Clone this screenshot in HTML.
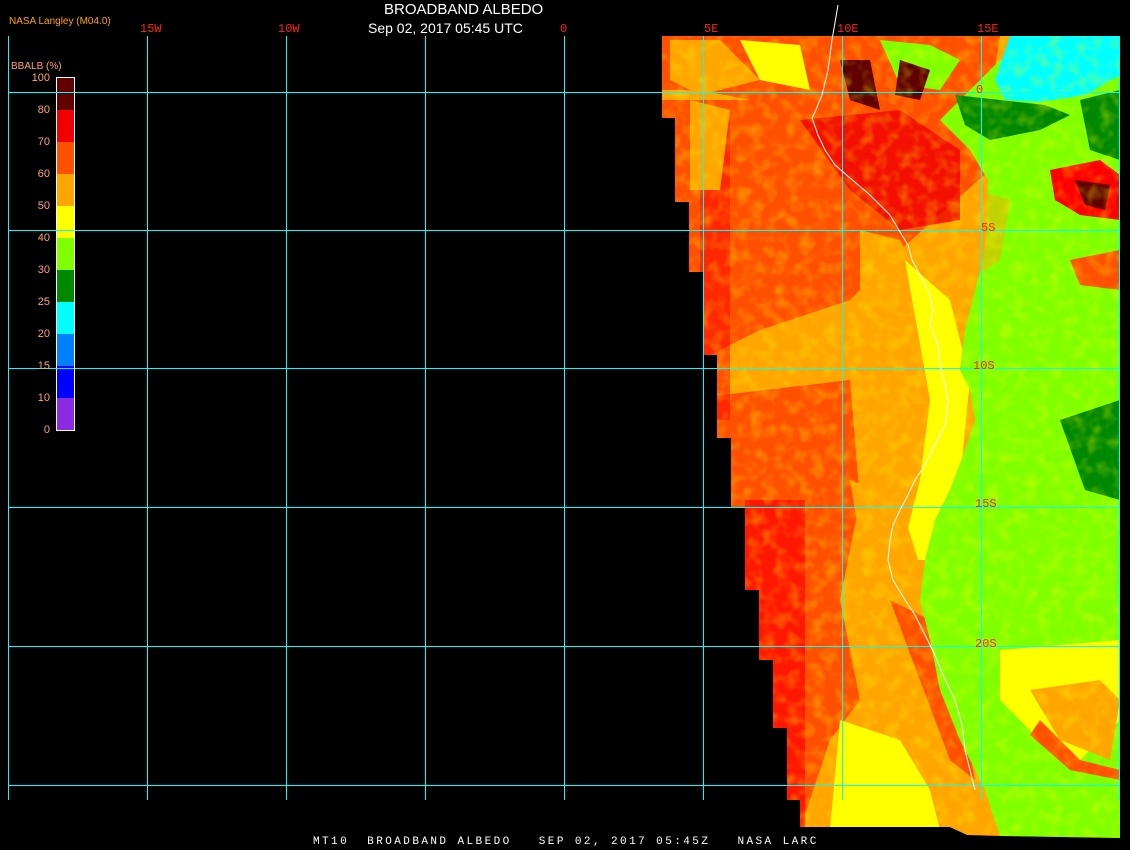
<!DOCTYPE html>
<html><head><meta charset="utf-8"><style>
body{margin:0;background:#000;width:1130px;height:850px;overflow:hidden;position:relative;font-family:"Liberation Sans",sans-serif}
.t{position:absolute;white-space:nowrap}
</style></head><body>
<svg width="1130" height="850" style="position:absolute;left:0;top:0">
<defs>
<clipPath id="img"><polygon points="662,36 1120,36 1120,838 1000,836 967,835 950,827 800,827 800,800 787,800 787,728 773,728 773,660 759,660 759,590 745,590 745,507 731,507 731,438 717,438 717,355 704,355 704,272 689,272 689,202 675,202 675,118 662,118"/></clipPath>
<filter id="n" x="0" y="0" width="100%" height="100%"><feTurbulence type="fractalNoise" baseFrequency="0.08" numOctaves="2" seed="3"/><feColorMatrix values="0 0 0 0 1  0 0 0 0 1  0 0 0 0 0  0 0 0 -2.2 1.25"/></filter>
</defs>
<g clip-path="url(#img)">
<rect x="660" y="36" width="470" height="810" fill="#ffa500"/>
<polygon points="660,100 980,100 990,170 900,250 850,300 760,330 700,360 660,360" fill="#ff5000"/>
<polygon points="680,400 850,380 860,500 840,600 860,700 830,740 800,830 660,830" fill="#ff5000"/>
<rect x="745" y="500" width="60" height="330" fill="#f00" opacity="0.7"/>
<rect x="700" y="120" width="30" height="300" fill="#f00" opacity="0.5"/>
<polygon points="800,120 900,110 960,150 960,220 900,230 850,190" fill="#f00000" opacity="0.8"/>
<polygon points="660,36 1000,36 990,100 900,110 800,110 700,90 660,90" fill="#ff5000"/>
<polygon points="670,40 720,40 760,80 700,95 670,80" fill="#ffa500"/>
<polygon points="740,40 800,45 810,90 760,80" fill="#ffff00"/>
<polygon points="880,40 930,45 960,60 940,90 900,85" fill="#80ff00"/>
<polygon points="840,60 870,60 880,110 850,100" fill="#600000"/>
<polygon points="900,60 930,70 920,100 895,95" fill="#600000"/>
<polygon points="690,100 730,110 720,190 690,190" fill="#ffa500"/>
<polygon points="860,230 900,240 930,300 950,380 900,400 860,360" fill="#ffa500"/>
<polygon points="905,260 950,300 970,380 960,480 930,560 900,560 920,480 930,400" fill="#ffff00"/>
<polygon points="850,480 900,500 930,600 950,700 980,800 960,830 900,830 880,740 860,680 870,600" fill="#ffa500"/>
<polygon points="840,720 900,740 930,790 940,830 830,830" fill="#ffff00"/>
<polygon points="890,600 930,620 960,700 975,780 950,760 920,680" fill="#ff5000"/>
<polygon points="940,120 1000,60 1120,36 1120,838 1000,836 985,790 960,740 940,690 930,640 920,600 925,560 935,520 950,490 965,450 975,420 970,390 960,370 965,330 975,290 985,250 988,180 970,150" fill="#80ff00"/>
<polygon points="975,190 1010,200 1000,260 970,280" fill="#ffa500" opacity="0.5"/>
<polygon points="1000,650 1120,640 1120,720 1080,760 1040,740 1000,700" fill="#ffff00"/>
<polygon points="1030,690 1100,680 1120,700 1110,760 1060,740" fill="#ffa500"/>
<polygon points="1040,720 1080,760 1120,770 1120,780 1070,770 1030,735" fill="#ff5000"/>
<polygon points="1010,36 1120,36 1120,75 1085,95 1040,102 1005,100 995,80" fill="#00ffff"/>
<polygon points="955,95 1000,100 1045,105 1070,115 1040,130 990,140 965,125" fill="#008800"/>
<polygon points="1080,100 1120,90 1120,160 1090,150" fill="#008800"/>
<polygon points="1050,170 1100,160 1120,175 1120,220 1080,215 1055,200" fill="#f00"/>
<polygon points="1075,180 1110,185 1105,210 1085,205" fill="#600000"/>
<polygon points="1070,260 1120,250 1120,290 1080,285" fill="#ff5000"/>
<polygon points="1060,420 1120,400 1120,500 1085,490" fill="#008800"/>
<rect x="660" y="36" width="470" height="810" filter="url(#n)" opacity="0.35"/>
</g>
<g stroke="#00ffff" stroke-width="1" shape-rendering="crispEdges">
<line x1="8.5" y1="36" x2="8.5" y2="800"/><line x1="147.5" y1="36" x2="147.5" y2="800"/><line x1="286.5" y1="36" x2="286.5" y2="800"/><line x1="425.5" y1="36" x2="425.5" y2="800"/><line x1="564.5" y1="36" x2="564.5" y2="800"/><line x1="703.5" y1="36" x2="703.5" y2="800"/><line x1="842.5" y1="36" x2="842.5" y2="800"/><line x1="981.5" y1="36" x2="981.5" y2="800"/><line x1="1119.5" y1="36" x2="1119.5" y2="800"/>
<line x1="8" y1="92.5" x2="1120" y2="92.5"/><line x1="8" y1="230.5" x2="1120" y2="230.5"/><line x1="8" y1="368.5" x2="1120" y2="368.5"/><line x1="8" y1="507.5" x2="1120" y2="507.5"/><line x1="8" y1="646.5" x2="1120" y2="646.5"/><line x1="8" y1="785.5" x2="1120" y2="785.5"/>
</g>
<polyline fill="none" stroke="#fff" stroke-width="1" points="838,5 832,40 828,70 822,95 815,112 812,118 818,135 825,150 835,165 850,178 870,195 890,215 900,232 908,245 912,260 920,275 928,290 933,310 930,325 938,345 940,365 945,385 948,400 945,425 935,445 925,465 915,480 908,495 900,510 893,525 890,540 888,560 893,580 905,600 915,615 925,635 935,655 943,675 955,700 962,725 965,750 970,770 975,790"/>
<g shape-rendering="crispEdges">
<rect x="56.5" y="77.5" width="18" height="353" fill="none" stroke="#fff"/>
<rect x="57" y="78" width="17" height="32" fill="#600000"/>
<rect x="57" y="110" width="17" height="32" fill="#f00000"/>
<rect x="57" y="142" width="17" height="32" fill="#ff5000"/>
<rect x="57" y="174" width="17" height="32" fill="#ffa500"/>
<rect x="57" y="206" width="17" height="32" fill="#ffff00"/>
<rect x="57" y="238" width="17" height="32" fill="#80ff00"/>
<rect x="57" y="270" width="17" height="32" fill="#008800"/>
<rect x="57" y="302" width="17" height="32" fill="#00ffff"/>
<rect x="57" y="334" width="17" height="32" fill="#0080ff"/>
<rect x="57" y="366" width="17" height="32" fill="#0000ff"/>
<rect x="57" y="398" width="17" height="32" fill="#8a2be2"/>
</g>
<line x1="8" y1="92.5" x2="74" y2="92.5" stroke="#00ffff"/>
<line x1="8" y1="230.5" x2="74" y2="230.5" stroke="#00ffff"/>
<line x1="8" y1="368.5" x2="74" y2="368.5" stroke="#00ffff"/>
</svg>
<div class="t" style="left:384px;top:1px;color:#fff;font-size:15px">BROADBAND ALBEDO</div>
<div class="t" style="left:368px;top:20px;color:#fff;font-size:14px">Sep 02, 2017 05:45 UTC</div>
<div class="t" style="left:9px;top:16px;color:#ffa500;font-size:10px">NASA Langley (M04.0)</div>
<div class="t" style="left:11px;top:61px;color:#ffa080;font-size:10px">BBALB (%)</div>
<div style="position:absolute;left:20px;top:62px;width:30px;color:#ffa080;font-size:11px;text-align:right;line-height:32px">100<br>80<br>70<br>60<br>50<br>40<br>30<br>25<br>20<br>15<br>10<br>0</div>
<div style="font-family:'Liberation Mono',monospace;color:#ff2020;font-size:12px">
<div class="t" style="left:140px;top:22px">15W</div>
<div class="t" style="left:278px;top:22px">10W</div>
<div class="t" style="left:560px;top:22px">0</div>
<div class="t" style="left:704px;top:22px">5E</div>
<div class="t" style="left:837px;top:22px">10E</div>
<div class="t" style="left:977px;top:22px">15E</div>
<div class="t" style="left:976px;top:83px">0</div>
<div class="t" style="left:981px;top:221px">5S</div>
<div class="t" style="left:973px;top:359px">10S</div>
<div class="t" style="left:975px;top:497px">15S</div>
<div class="t" style="left:975px;top:637px">20S</div>
</div>
<div class="t" style="left:313px;top:836px;color:#fff;font-family:'Liberation Mono',monospace;font-size:11px;letter-spacing:2.43px;white-space:pre">MT10  BROADBAND ALBEDO   SEP 02, 2017 05:45Z   NASA LARC</div>
</body></html>
